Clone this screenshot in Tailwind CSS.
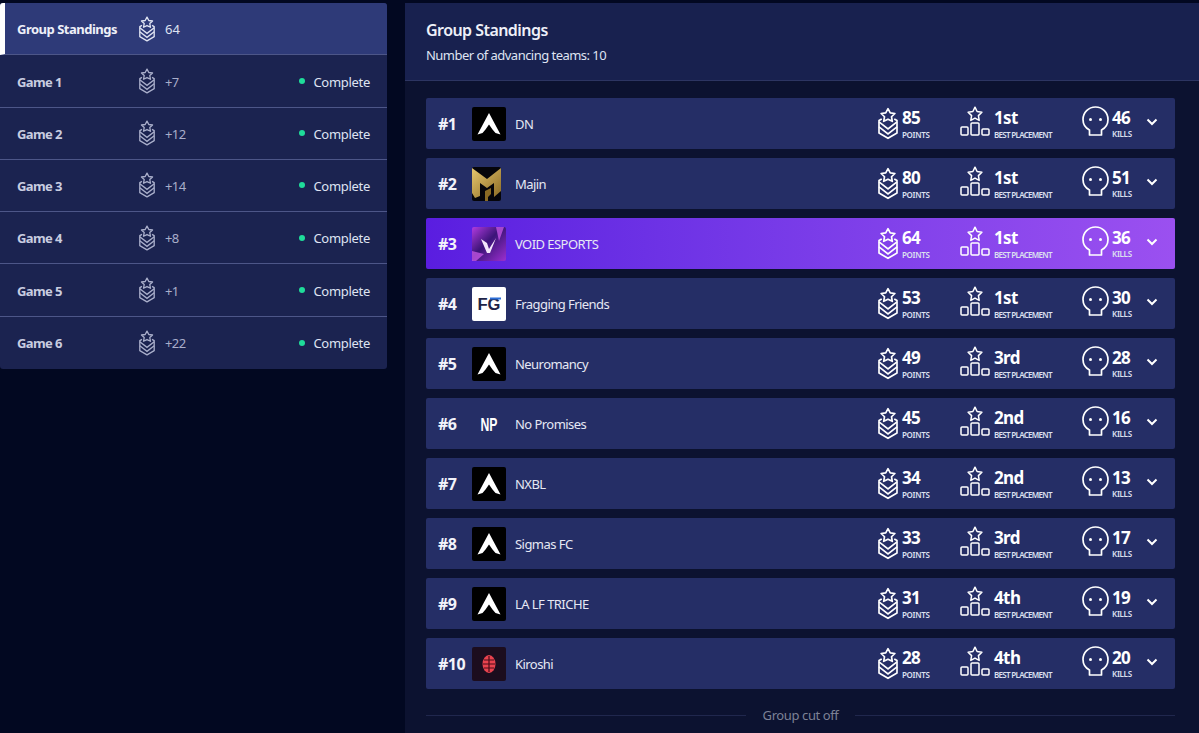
<!DOCTYPE html>
<html lang="en">
<head>
    <meta charset="UTF-8">
    <meta name="viewport" content="width=device-width, initial-scale=1.0">
    <title>Group Standings</title>
    <script src="https://cdn.jsdelivr.net/npm/@tailwindcss/browser@4"></script>
</head>
<body class="bg-[#020821] text-white h-[733px] w-[1199px] overflow-hidden font-['Noto_Sans','Open_Sans',sans-serif]">
    <!-- icon sprites -->
    <svg class="hidden">
        <symbol id="rank" viewBox="0 0 24 38">
            <path d="M12 1.200l2.700 5 5.600.8-4.100 3.900 1 5.500-5.200-2.600-5.200 2.600 1-5.500-4.100-3.900 5.600-.8z" fill="none" stroke="currentColor" stroke-width="2" stroke-linejoin="round"/>
            <path d="M4.500 13.500L1.200 15.500v15L12 36.800l10.800-6.300v-15L19.500 13.500" fill="none" stroke="currentColor" stroke-width="2" stroke-linejoin="round"/>
            <path d="M1.200 17L12 25.500 22.800 17M1.200 23L12 31.500 22.800 23" fill="none" stroke="currentColor" stroke-width="2"/>
        </symbol>
        <symbol id="podium" viewBox="0 0 30 30">
            <path d="M15 1.200l2.100 4.300 4.800.7-3.500 3.400.8 4.800-4.200-2.300-4.200 2.300.8-4.800-3.500-3.400 4.800-.7z" fill="none" stroke="currentColor" stroke-width="1.500" stroke-linejoin="round"/>
            <rect x="1" y="21" width="7" height="8" rx="1" fill="none" stroke="currentColor" stroke-width="1.500"/>
            <rect x="11" y="17" width="8" height="12" rx="1" fill="none" stroke="currentColor" stroke-width="1.500"/>
            <rect x="22" y="23" width="7" height="6" rx="1" fill="none" stroke="currentColor" stroke-width="1.500"/>
        </symbol>
        <symbol id="skull" viewBox="0 0 27 30">
            <path d="M7.500 24C3.500 22 1 18 1 13.500 1 6.500 6.500 1 13.500 1S26 6.500 26 13.500c0 4.500-2.500 8.500-6.500 10.500v5h-12z" fill="none" stroke="currentColor" stroke-width="1.700" stroke-linejoin="round"/>
            <circle cx="8.500" cy="13.500" r="1.500" fill="currentColor"/>
            <circle cx="18.500" cy="13.500" r="1.500" fill="currentColor"/>
        </symbol>
        <symbol id="apex" viewBox="0 0 34 34">
            <rect width="34" height="34" rx="2" fill="#000"/>
            <path d="M17 6L28.500 27.500 23.500 26 20.500 22.500 17 17.500 13.500 22.500 10.500 26 5.500 27.500z" fill="#fff"/>
        </symbol>
    </svg>

    <div class="flex items-start gap-[18px] pt-[3px]">
        <!-- game list -->
        <aside class="w-[387px] shrink-0 rounded-[3px] overflow-hidden bg-[#1b2350]">
            <div class="flex items-center h-[52.28px] bg-[#2e3a78] border-b border-[#4d5688] border-l-[5px] border-l-white">
                <div class="w-[134px] pl-[12px] pt-[3px] text-[13px] font-bold text-[#eef0f8] tracking-[-0.5px]">Group Standings</div>
                <svg class="w-[16px] h-[26px] text-[#dfe3f2]"><use href="#rank"/></svg>
                <span class="ml-[10px] pt-[3px] text-[13px] text-[#dfe3f2]">64</span>
            </div>
            <div id="games"></div>
        </aside>

        <!-- standings -->
        <main class="flex-1 bg-[#0c1230] h-[730px]">
            <header class="h-[78px] bg-[#18214f] border-b border-[#2d3562] px-[21px] pt-[15px]">
                <h1 class="text-[16px] leading-[24px] font-semibold text-[#eef0f8] tracking-[-0.55px]">Group Standings</h1>
                <p class="mt-[3px] text-[13px] leading-[20px] text-[#dfe3f2] tracking-[-0.53px]">Number of advancing teams: 10</p>
            </header>
            <div id="teams" class="pl-[21px] pr-[24px] pt-[17px] flex flex-col gap-[9px]"></div>
            <div class="flex items-center gap-[17px] ml-[21px] mr-[24px] mt-[17px]">
                <div class="flex-1 h-px bg-[#20274d]"></div>
                <span class="text-[13px] leading-[18px] text-[#7d8196] tracking-[-0.4px]">Group cut off</span>
                <div class="flex-1 h-px bg-[#20274d]"></div>
            </div>
        </main>
    </div>

    <script>
        const games = [
            ["Game 1", "+7"], ["Game 2", "+12"], ["Game 3", "+14"],
            ["Game 4", "+8"], ["Game 5", "+1"], ["Game 6", "+22"]
        ];

        document.getElementById('games').innerHTML = games.map(([name, pts], i) => `
            <div class="flex items-center h-[52.28px] ${i < 5 ? 'border-b border-[#4d5688]' : ''}">
                <div class="w-[139px] pl-[17px] pt-[3px] text-[13px] font-bold text-[#c9cde0] tracking-[-0.6px]">${name}</div>
                <svg class="w-[16px] h-[26px] text-[#a9aeca]"><use href="#rank"/></svg>
                <span class="ml-[10px] pt-[3px] text-[13px] text-[#a9aeca] tracking-[-0.6px]">${pts}</span>
                <span class="ml-auto w-[6px] h-[6px] rounded-full bg-[#1fdc9a]"></span>
                <span class="ml-[8px] mr-[17px] pt-[3px] text-[13px] text-[#dfe3f2] tracking-[-0.3px]">Complete</span>
            </div>`).join('');

        const apex = `<svg class="w-[34px] h-[34px]"><use href="#apex"/></svg>`;
        const logos = {
            majin: `<svg class="w-[34px] h-[34px]" viewBox="0 0 34 34">
                <defs><linearGradient id="gold" x1="0" y1="0" x2="1" y2="1"><stop offset="0" stop-color="#e6c66e"/><stop offset="1" stop-color="#8a6a24"/></linearGradient></defs>
                <rect width="29" height="34" rx="2" fill="#05050a"/>
                <path d="M0 1L15 12 29 1V24L22 30V16L15 21 8 16V29L3 31 0 26z" fill="url(#gold)"/>
                <path d="M13 24l6-3v6l-3 3v4h-3z" fill="#8a6a24"/>
            </svg>`,
            void: `<svg class="w-[34px] h-[34px]" viewBox="0 0 34 34">
                <defs><linearGradient id="voidbg" x1="0" y1="0" x2="1" y2="1"><stop offset="0" stop-color="#b13be0"/><stop offset="0.45" stop-color="#3c1478"/><stop offset="1" stop-color="#9c2fd0"/></linearGradient></defs>
                <rect width="34" height="34" rx="2" fill="url(#voidbg)"/>
                <path d="M0 24l12 3-8 7H0zM24 0h8l-5 14z" fill="#d35cf0" opacity=".7"/>
                <path d="M9 12l6 4 2 6 7-11-6 15h-3z" fill="#f3e6fb"/>
            </svg>`,
            ff: `<svg class="w-[34px] h-[34px]" viewBox="0 0 34 34">
                <rect width="34" height="34" rx="2" fill="#fff"/>
                <text x="17" y="23" text-anchor="middle" font-family="Liberation Sans" font-weight="700" font-size="16" textLength="23" lengthAdjust="spacingAndGlyphs" fill="#1d2348">FG</text>
                <rect x="18" y="10.500" width="11" height="2" fill="#2c6fd8"/>
            </svg>`,
            np: `<svg class="w-[34px] h-[34px]" viewBox="0 0 34 34">
                <text x="17" y="24" text-anchor="middle" font-family="Liberation Sans" font-weight="700" font-size="18" textLength="17" lengthAdjust="spacingAndGlyphs" fill="#fff">NP</text>
            </svg>`,
            kiroshi: `<svg class="w-[34px] h-[34px]" viewBox="0 0 34 34">
                <rect width="34" height="34" rx="2" fill="#1c0d1e"/>
                <ellipse cx="17" cy="17" rx="6.500" ry="9" fill="#e8434f"/>
                <path d="M12 13h10M11 17h12M12 21h10M17 9v16" stroke="#4a0d18" stroke-width="1.200"/>
            </svg>`
        };

        const teams = [
            ["#1", apex, "DN", 85, "1st", 46],
            ["#2", logos.majin, "Majin", 80, "1st", 51],
            ["#3", logos.void, "VOID ESPORTS", 64, "1st", 36, true],
            ["#4", logos.ff, "Fragging Friends", 53, "1st", 30],
            ["#5", apex, "Neuromancy", 49, "3rd", 28],
            ["#6", logos.np, "No Promises", 45, "2nd", 16],
            ["#7", apex, "NXBL", 34, "2nd", 13],
            ["#8", apex, "Sigmas FC", 33, "3rd", 17],
            ["#9", apex, "LA LF TRICHE", 31, "4th", 19],
            ["#10", logos.kiroshi, "Kiroshi", 28, "4th", 20]
        ];

        document.getElementById('teams').innerHTML = teams.map(([rank, logo, name, pts, best, kills, own]) => `
            <div class="flex items-center h-[51px] rounded-[2px] pl-[12px] ${own ? 'bg-gradient-to-r from-[#5a1de0] to-[#9b50f0]' : 'bg-[#252e66]'}">
                <div class="w-[34px] text-[16px] font-bold tracking-[-0.5px] text-[#f2f3fa]">${rank}</div>
                <div class="w-[34px] h-[34px] shrink-0">${logo}</div>
                <div class="ml-[9px] pt-[2px] text-[13px] text-[#e6e8f4] tracking-[-0.55px]">${name}</div>

                <div class="ml-auto w-[82px] flex items-center">
                    <svg class="w-[20px] h-[33px] shrink-0"><use href="#rank"/></svg>
                    <div class="ml-[4px]">
                        <div class="text-[17px] leading-[19px] font-bold tracking-[-0.6px]">${pts}</div>
                        <div class="mt-[3px] text-[8px] leading-[10px] font-semibold text-[#dde0f0] tracking-[-0.3px]">POINTS</div>
                    </div>
                </div>
                <div class="w-[122px] flex items-center">
                    <svg class="w-[30px] h-[30px] shrink-0 mb-[5px]"><use href="#podium"/></svg>
                    <div class="ml-[4px]">
                        <div class="text-[17px] leading-[19px] font-bold tracking-[-0.6px]">${best}</div>
                        <div class="mt-[3px] text-[8px] leading-[10px] font-semibold text-[#dde0f0] tracking-[-0.7px]">BEST PLACEMENT</div>
                    </div>
                </div>
                <div class="w-[64px] flex items-center">
                    <svg class="w-[27px] h-[30px] shrink-0 mb-[5px]"><use href="#skull"/></svg>
                    <div class="ml-[3px]">
                        <div class="text-[17px] leading-[19px] font-bold tracking-[-0.6px]">${kills}</div>
                        <div class="mt-[2px] text-[8px] leading-[10px] font-semibold text-[#dde0f0] tracking-[-0.3px]">KILLS</div>
                    </div>
                </div>
                <svg class="w-[12px] h-[8px] mr-[17px] mb-[3px]" viewBox="0 0 12 8"><path d="M1.500 1.500L6 6l4.500-4.500" fill="none" stroke="currentColor" stroke-width="2"/></svg>
            </div>`).join('');
    </script>
</body>
</html>
